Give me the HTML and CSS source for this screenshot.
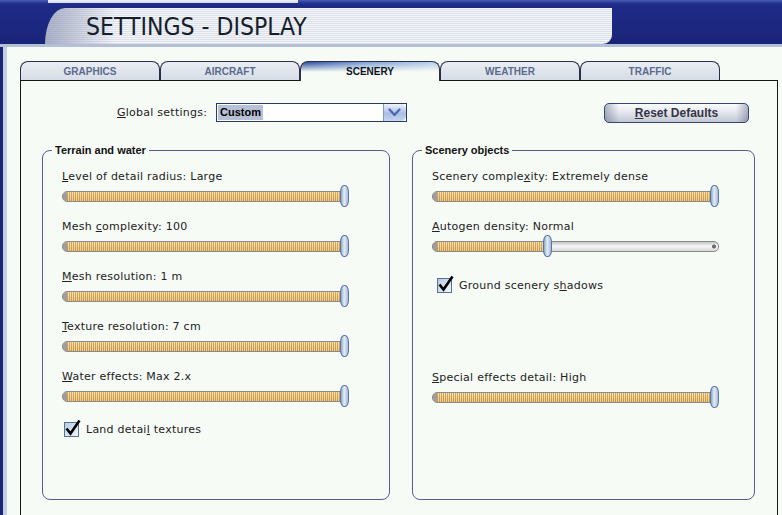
FILE: index.html
```html
<!DOCTYPE html>
<html lang="en">
<head>
    <meta charset="UTF-8">
    <title>Settings - Display</title>
    <link rel="stylesheet" href="styles.css">
</head>
<body>
    <div class="hdr">
        <div class="ghost"></div>
        <div class="band">
            <div class="title"><span>SETTINGS - DISPLAY</span></div>
        </div>
    </div>
    <div class="frame">
        <div class="inner">
            <div class="tabs">
                <div class="tab">GRAPHICS</div>
                <div class="tab">AIRCRAFT</div>
                <div class="tab active">SCENERY</div>
                <div class="tab">WEATHER</div>
                <div class="tab">TRAFFIC</div>
            </div>
            <div class="panel">
                <div class="global">
                    <label class="glabel"><u>G</u>lobal settings:</label>
                    <div class="combo">
                        <span class="sel">Custom</span>
                        <span class="arrow">
                            <svg width="13" height="9" viewBox="0 0 13 9"><path d="M1.5 1.5 L6.5 7 L11.5 1.5" fill="none" stroke="#4a68b0" stroke-width="2.2" stroke-linecap="round" stroke-linejoin="round"/></svg>
                        </span>
                    </div>
                    <button class="reset"><u>R</u>eset Defaults</button>
                </div>

                <div class="groups">
                    <fieldset class="group wide">
                        <legend>Terrain and water</legend>
                        <div class="gbody">
                            <div class="row">
                                <div class="lbl"><u>L</u>evel of detail radius: Large</div>
                                <div class="slider"><div class="track"><div class="fill" style="width:100%"></div></div><div class="thumb" style="left:278px"></div></div>
                            </div>
                            <div class="row">
                                <div class="lbl">Mesh <u>c</u>omplexity: 100</div>
                                <div class="slider"><div class="track"><div class="fill" style="width:100%"></div></div><div class="thumb" style="left:278px"></div></div>
                            </div>
                            <div class="row">
                                <div class="lbl"><u>M</u>esh resolution: 1 m</div>
                                <div class="slider"><div class="track"><div class="fill" style="width:100%"></div></div><div class="thumb" style="left:278px"></div></div>
                            </div>
                            <div class="row">
                                <div class="lbl"><u>T</u>exture resolution: 7 cm</div>
                                <div class="slider"><div class="track"><div class="fill" style="width:100%"></div></div><div class="thumb" style="left:278px"></div></div>
                            </div>
                            <div class="row">
                                <div class="lbl"><u>W</u>ater effects: Max 2.x</div>
                                <div class="slider"><div class="track"><div class="fill" style="width:100%"></div></div><div class="thumb" style="left:278px"></div></div>
                            </div>
                            <div class="check first">
                                <span class="cb"><svg width="17" height="17" viewBox="0 0 17 17"><path d="M2.5 8.5 L6.5 13.5 L15.5 0.5" fill="none" stroke="#000" stroke-width="2.6" stroke-linejoin="miter"/></svg></span>
                                <span class="lbl">Land detai<u>l</u> textures</span>
                            </div>
                        </div>
                    </fieldset>

                    <fieldset class="group narrow">
                        <legend>Scenery objects</legend>
                        <div class="gbody">
                            <div class="row">
                                <div class="lbl">Scenery comple<u>x</u>ity: Extremely dense</div>
                                <div class="slider"><div class="track"><div class="fill" style="width:100%"></div></div><div class="thumb" style="left:278px"></div></div>
                            </div>
                            <div class="row">
                                <div class="lbl"><u>A</u>utogen density: Normal</div>
                                <div class="slider"><div class="track"><div class="fill" style="width:40%"></div></div><div class="thumb" style="left:111px"></div></div>
                            </div>
                            <div class="check shadows">
                                <span class="cb"><svg width="17" height="17" viewBox="0 0 17 17"><path d="M2.5 8.5 L6.5 13.5 L15.5 0.5" fill="none" stroke="#000" stroke-width="2.6" stroke-linejoin="miter"/></svg></span>
                                <span class="lbl">Ground scenery s<u>h</u>adows</span>
                            </div>
                            <div class="row special">
                                <div class="lbl"><u>S</u>pecial effects detail: High</div>
                                <div class="slider"><div class="track"><div class="fill" style="width:100%"></div></div><div class="thumb" style="left:278px"></div></div>
                            </div>
                        </div>
                    </fieldset>
                </div>
            </div>
        </div>
    </div>
</body>
</html>
```

FILE: styles.css
```css
/* page */
body {
    margin: 0;
    height: 515px;
    overflow: hidden;
    background: #f7fbf6;
    font-family: "DejaVu Sans", sans-serif;
    color: #222;
}

/* header bar */
.hdr {
    height: 44px;
    background: linear-gradient(180deg, #4a5cb4 0, #1e2b88 4px, #1a2478 100%);
    border-bottom: 3px solid #b4bfd8;
}

/* bottom edge of the screen above, just peeking in */
.ghost {
    height: 3px;
    margin-left: 48px;
    width: 250px;
    background: linear-gradient(180deg, #eef1f7, #d4dae8);
}

.band {
    padding: 5px 0 0 45px;
}

.title {
    width: 567px;
    height: 36px;
    box-sizing: border-box;
    padding-left: 41px;
    border-radius: 20px 0 9px 0 / 36px 0 9px 0;
    background:
        linear-gradient(90deg, rgba(110, 122, 160, 0.55) 0, rgba(110, 122, 160, 0) 70px),
        repeating-linear-gradient(180deg, #f3f5f8 0 1px, #dde1e9 1px 2px);
}

.title span {
    display: block;
    font-family: "DejaVu Sans Condensed", "DejaVu Sans", sans-serif;
    font-size: 24.5px;
    line-height: 37px;
    color: #15202c;
}

/* window frame */
.frame {
    border-left: 3px solid #1a2478;
    height: 468px;
}

.inner {
    border-left: 4px solid #c7cede;
    height: 100%;
    padding-left: 13px;
}

/* tabs */
.tabs {
    display: flex;
    align-items: flex-start;
    padding-top: 14px;
}

.tab {
    width: 140px;
    height: 19px;
    box-sizing: border-box;
    border: 1px solid #2a3048;
    border-bottom: none;
    border-radius: 8px 8px 0 0;
    background: linear-gradient(180deg, #e9edf3, #d7dde7);
    font-family: "Liberation Sans", Arial, sans-serif;
    font-weight: bold;
    font-size: 10px;
    line-height: 20px;
    text-align: center;
    color: #5b6b8b;
}

.tab.active {
    position: relative;
    z-index: 1;
    height: 20px;
    margin-bottom: -1px;
    color: #0e1420;
    background:
        linear-gradient(180deg, rgba(247, 251, 246, 0) 0, #f7fbf6 10px),
        linear-gradient(90deg, #26479a, #7c9fd6 45%, #bcd0ea);
}

/* main panel */
.panel {
    width: 758px;
    height: 440px;
    box-sizing: border-box;
    border: 1px solid #181818;
    border-bottom: none;
    padding: 22px 0 0 0;
}

.global {
    display: flex;
    align-items: center;
    height: 19px;
}

.glabel {
    margin-left: 96px;
    width: 88px;
    text-align: right;
    white-space: nowrap;
    font-size: 11px;
    letter-spacing: 0.25px;
}

.combo {
    display: flex;
    align-items: center;
    margin-left: 11px;
    width: 191px;
    height: 19px;
    box-sizing: border-box;
    border: 1px solid #2a3a5a;
    background: #fff;
}

.sel {
    margin-left: 1px;
    padding: 0 2px;
    background: #b6c0d6;
    font-family: "Liberation Sans", Arial, sans-serif;
    font-weight: bold;
    font-size: 11px;
    line-height: 15px;
    color: #000;
}

.arrow {
    margin-left: auto;
    width: 23px;
    height: 17px;
    display: flex;
    align-items: center;
    justify-content: center;
    border-radius: 0 5px 5px 0;
    background: linear-gradient(180deg, #eef3fc, #a9bde4 55%, #c6d6f2);
    box-shadow: inset 1px 0 0 #7f97c8;
}

.reset {
    margin: 0 28px 0 auto;
    width: 145px;
    height: 20px;
    padding: 0;
    border: 1px solid #3c4470;
    border-radius: 5px;
    background:
        linear-gradient(90deg, rgba(90, 100, 130, 0.45) 0, rgba(90, 100, 130, 0) 14px, rgba(90, 100, 130, 0) 131px, rgba(90, 100, 130, 0.45) 100%),
        linear-gradient(180deg, #fbfcfd 0, #e4e7ee 45%, #c2c7d3 100%);
    font-family: "Liberation Sans", Arial, sans-serif;
    font-weight: bold;
    font-size: 12px;
    color: #353545;
}

/* group boxes */
.groups {
    display: flex;
    gap: 22px;
    margin: 21px 0 0 21px;
}

.group {
    margin: 0;
    padding: 13px 0 0 0;
    height: 357px;
    box-sizing: border-box;
    min-width: 0;
    border: 1px solid #5c5c8c;
    border-radius: 8px;
}

.group.wide { width: 348px; }
.group.narrow { width: 343px; }

.group legend {
    margin-left: 9px;
    padding: 0 3px;
    font-family: "Liberation Sans", Arial, sans-serif;
    font-weight: bold;
    font-size: 11px;
    line-height: 14px;
    color: #111;
}

.gbody {
    padding-left: 19px;
}

.lbl {
    font-size: 11px;
    line-height: 14px;
    letter-spacing: 0.25px;
    white-space: nowrap;
}

.row {
    margin-bottom: 12px;
}

/* slider */
.slider {
    position: relative;
    width: 287px;
    height: 24px;
}

.track {
    position: relative;
    top: 7px;
    height: 11px;
    box-sizing: border-box;
    border: 1px solid #8a8a8e;
    border-radius: 5px;
    overflow: hidden;
    background:
        radial-gradient(circle at calc(100% - 4px) 50%, #6a6a72 0 1.6px, rgba(0, 0, 0, 0) 2.4px),
        linear-gradient(180deg, #c4c4c6, #f7f7f7 45%, #d8d8da);
}

.fill {
    height: 100%;
    background:
        linear-gradient(90deg, #9d9da6 0 4px, rgba(0, 0, 0, 0) 4px),
        linear-gradient(180deg, rgba(255, 255, 255, 0.15), rgba(120, 80, 20, 0.1)),
        repeating-linear-gradient(90deg, #d39c42 0 1px, #f5dca2 1px 2px);
}

.thumb {
    position: absolute;
    top: 1px;
    width: 9px;
    height: 22px;
    box-sizing: border-box;
    border: 1px solid #56759e;
    border-radius: 4px / 7px;
    background: linear-gradient(90deg, #8aa6c8, #e4ecf6 45%, #a9bdd8);
}

/* checkboxes (margins collapse with the row above) */
.check {
    display: flex;
    align-items: center;
    gap: 7px;
}

.check.first {
    margin: 14px 0 0 2px;
}

.check.shadows {
    margin: 20px 0 0 5px;
}

.cb {
    width: 15px;
    height: 15px;
    box-sizing: border-box;
    border: 1px solid #55728f;
    background: linear-gradient(135deg, #b6cbe4, #f2f6fb);
}

.cb svg {
    display: block;
    margin: -3px 0 0 -1px;
    overflow: visible;
}

.row.special {
    margin-top: 78px;
}
```
